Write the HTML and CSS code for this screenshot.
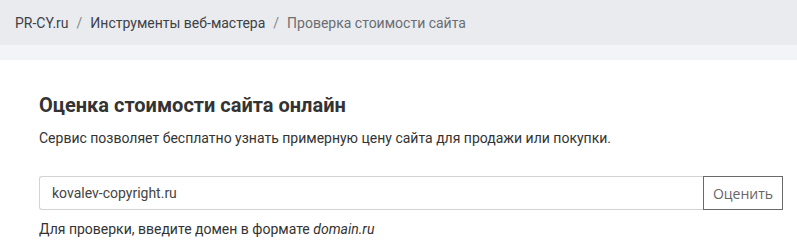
FILE: index.html
```html
<!DOCTYPE html>
<html lang="ru">
<head>
  <meta charset="UTF-8" />
  <title>Проверка стоимости сайта</title>
  <link rel="stylesheet" href="styles.css">
</head>
<body>
  <nav class="crumbs">
    <a href="#">PR-CY.ru</a>
    <span class="sep">/</span>
    <a href="#">Инструменты веб-мастера</a>
    <span class="sep">/</span>
    <span class="current">Проверка стоимости сайта</span>
  </nav>
  <div class="strip"></div>
  <main class="card">
    <h1>Оценка стоимости сайта онлайн</h1>
    <p class="lead">Сервис позволяет бесплатно узнать примерную цену сайта для продажи или покупки.</p>
    <form class="check" autocomplete="off">
      <input type="text" class="domain" value="kovalev-copyright.ru" />
      <button type="submit" class="btn">Оценить</button>
    </form>
    <p class="hint">Для проверки, введите домен в формате <em>domain.ru</em></p>
  </main>
</body>
</html>
```

FILE: styles.css
```css
body {
  margin: 0;
  background: #fff;
  font-family: Roboto, Arial, sans-serif;
  color: #333;
}
.crumbs {
  height: 45px;
  background: #e9ebee;
  display: flex;
  align-items: center;
  padding: 0 15px;
  box-sizing: border-box;
  font-size: 14px;
}
.crumbs a {
  color: #3e4146;
  text-decoration: none;
}
.crumbs .sep {
  color: #888;
  margin: 0 8px;
}
.crumbs .current {
  color: #6b6e73;
}
.strip {
  height: 15px;
  background: #f3f4f7;
}
.card {
  padding: 32px 14px 0 39px;
}
h1 {
  margin: 0;
  font-size: 20px;
  font-weight: 700;
  color: #333;
  line-height: 26px;
}
.lead {
  margin: 10px 0 0;
  font-size: 14px;
  line-height: 20px;
  color: #333;
}
.check {
  display: flex;
  margin-top: 28px;
  width: 744px;
}
.domain {
  flex: 1;
  height: 34px;
  box-sizing: border-box;
  border: 1px solid #d3d3d3;
  border-right: none;
  border-radius: 3px 0 0 3px;
  padding: 0 12px;
  font-family: Roboto, Arial, sans-serif;
  font-size: 14px;
  color: #444;
  outline: none;
}
.btn {
  width: 80px;
  height: 34px;
  box-sizing: border-box;
  border: 1px solid #6a6a6a;
  background: #fff;
  font-family: "Open Sans", Arial, sans-serif;
  font-size: 14px;
  color: #666;
  cursor: pointer;
}
.hint {
  margin: 9px 0 0;
  font-size: 14px;
  line-height: 20px;
  color: #333;
}
```
